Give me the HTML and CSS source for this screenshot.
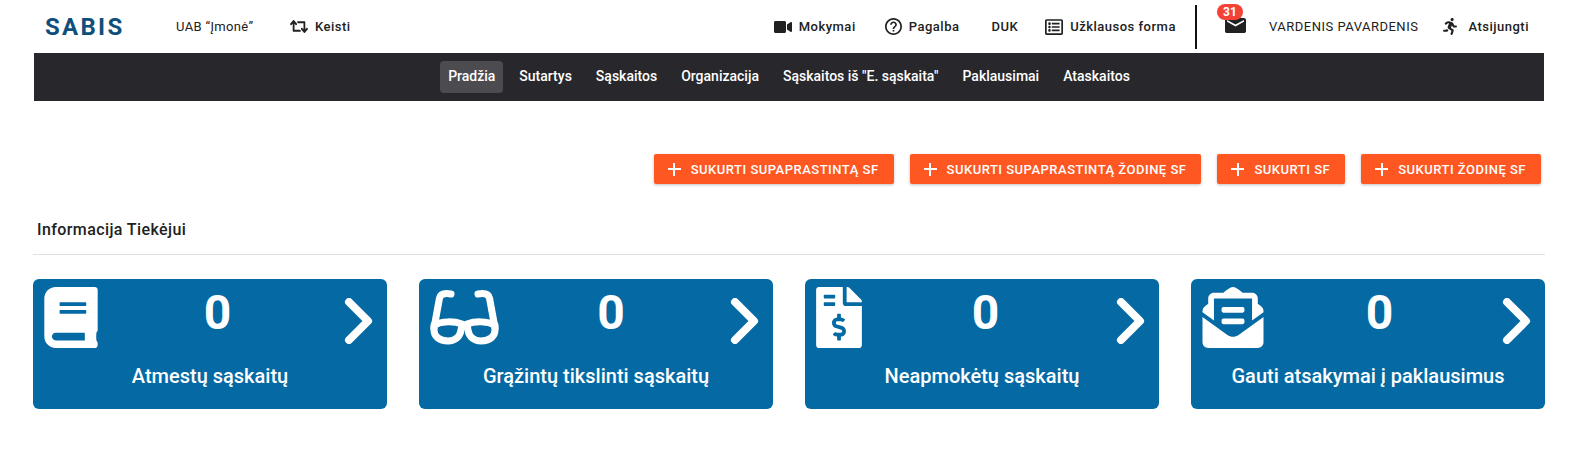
FILE: index.html
```html
<!doctype html>
<html lang="lt">
  <head>
    <meta charset="UTF-8" />
    <meta name="viewport" content="width=device-width, initial-scale=1.0" />
    <title>SABIS</title>
    <link rel="stylesheet" href="styles.css">
  </head>
  <body>
    <!-- Top bar -->
    <header class="topbar">
      <div class="brand">SABIS</div>
      <div class="company">UAB “Įmonė”</div>
      <a class="top-link switch">
        <svg class="ico-retweet" viewBox="0 0 640 512" preserveAspectRatio="none"><path d="M629.657 343.598L528.971 444.284c-9.373 9.372-24.568 9.372-33.941 0L394.343 343.598c-9.373-9.373-9.373-24.569 0-33.941l10.823-10.823c9.562-9.562 25.133-9.34 34.419.492L480 342.118V160H292.451a24.005 24.005 0 0 1-16.971-7.029l-16-16C244.361 121.851 255.069 96 276.451 96H520c13.255 0 24 10.745 24 24v222.118l40.416-43.792c9.285-9.831 24.856-10.054 34.419-.492l10.823 10.823c9.372 9.372 9.372 24.569-.001 33.941zm-265.138 15.431A23.999 23.999 0 0 0 347.548 352H160V169.881l40.416 43.792c9.286 9.831 24.856 10.054 34.419.491l10.822-10.822c9.373-9.373 9.373-24.569 0-33.941L144.971 67.716c-9.373-9.373-24.569-9.373-33.941 0L10.343 168.402c-9.373 9.373-9.373 24.569 0 33.941l10.822 10.822c9.562 9.562 25.133 9.34 34.419-.491L96 169.881V392c0 13.255 10.745 24 24 24h243.549c21.382 0 32.09-25.851 16.971-40.971l-16.001-16z"/></svg>
        Keisti
      </a>
      <div class="top-right">
        <a class="top-link link-video">
          <svg class="ico-video" viewBox="0 0 576 512"><path d="M336.2 64H47.8C21.4 64 0 85.4 0 111.8v288.4C0 426.6 21.4 448 47.8 448h288.4c26.4 0 47.8-21.4 47.8-47.8V111.8c0-26.4-21.4-47.8-47.8-47.8zm189.4 37.7L416 177.3v157.4l109.6 75.5c21.2 14.6 50.4-.3 50.4-25.8V127.5c0-25.4-29.1-40.4-50.4-25.8z"/></svg>
          Mokymai
        </a>
        <a class="top-link link-help">
          <svg class="ico-help" viewBox="2 2 20 20"><path d="M11 18h2v-2h-2v2zm1-16C6.48 2 2 6.48 2 12s4.48 10 10 10 10-4.48 10-10S17.52 2 12 2zm0 18c-4.41 0-8-3.59-8-8s3.59-8 8-8 8 3.59 8 8-3.59 8-8 8zm0-14c-2.21 0-4 1.79-4 4h2c0-1.1.9-2 2-2s2 .9 2 2c0 2-3 1.75-3 5h2c0-2.25 3-2.5 3-5 0-2.21-1.79-4-4-4z"/></svg>
          Pagalba
        </a>
        <a class="top-link link-duk">DUK</a>
        <a class="top-link">
          <svg class="ico-list" viewBox="0 0 512 512"><path d="M464 32H48C21.49 32 0 53.49 0 80v352c0 26.51 21.49 48 48 48h416c26.51 0 48-21.49 48-48V80c0-26.51-21.49-48-48-48zm-6 400H54a6 6 0 0 1-6-6V86a6 6 0 0 1 6-6h404a6 6 0 0 1 6 6v340a6 6 0 0 1-6 6zm-42-92v24c0 6.627-5.373 12-12 12H204c-6.627 0-12-5.373-12-12v-24c0-6.627 5.373-12 12-12h200c6.627 0 12 5.373 12 12zm0-96v24c0 6.627-5.373 12-12 12H204c-6.627 0-12-5.373-12-12v-24c0-6.627 5.373-12 12-12h200c6.627 0 12 5.373 12 12zm0-96v24c0 6.627-5.373 12-12 12H204c-6.627 0-12-5.373-12-12v-24c0-6.627 5.373-12 12-12h200c6.627 0 12 5.373 12 12zm-252 12c0 19.882-16.118 36-36 36s-36-16.118-36-36 16.118-36 36-36 36 16.118 36 36zm0 96c0 19.882-16.118 36-36 36s-36-16.118-36-36 16.118-36 36-36 36 16.118 36 36zm0 96c0 19.882-16.118 36-36 36s-36-16.118-36-36 16.118-36 36-36 36 16.118 36 36z"/></svg>
          Užklausos forma
        </a>
        <div class="divider"></div>
        <a class="mail">
          <svg class="ico-mail" viewBox="2 4 20 16" preserveAspectRatio="none"><path d="M20 4H4c-1.1 0-1.99.9-1.99 2L2 18c0 1.1.9 2 2 2h16c1.1 0 2-.9 2-2V6c0-1.1-.9-2-2-2zm0 4l-8 5-8-5V6l8 5 8-5v2z"/></svg>
          <span class="badge">31</span>
        </a>
        <div class="user">VARDENIS PAVARDENIS</div>
        <a class="top-link logout">
          <svg class="ico-run" viewBox="0 0 416 512"><path d="M272 96c26.51 0 48-21.49 48-48S298.51 0 272 0s-48 21.49-48 48 21.49 48 48 48zM113.69 317.47l-14.8 34.52H32c-17.67 0-32 14.33-32 32s14.33 32 32 32h77.45c19.25 0 36.58-11.44 44.11-29.09l8.79-20.52-10.67-6.3c-17.32-10.23-30.06-25.37-37.99-42.61zM384 223.99h-44.03l-26.06-53.25c-12.5-25.55-35.45-44.23-61.78-50.94l-71.08-21.14c-28.3-6.8-57.77-.55-80.84 17.14l-39.67 30.41c-14.03 10.75-16.69 30.83-5.92 44.86s30.84 16.66 44.86 5.92l39.69-30.41c7.67-5.89 17.44-8 25.27-6.14l14.7 4.37-37.46 87.39c-12.62 29.48-1.31 64.01 26.3 80.31l84.98 50.17-27.47 87.73c-5.28 16.86 4.11 34.81 20.97 40.09 3.19 1 6.41 1.48 9.58 1.48 13.61 0 26.23-8.77 30.52-22.45l31.64-101.06c5.91-20.77-2.89-43.08-21.64-54.39l-61.24-36.14 31.31-78.28 20.27 41.43c8 16.34 24.92 26.89 43.11 26.89H384c17.67 0 32-14.33 32-32s-14.33-31.99-32-31.99z"/></svg>
          Atsijungti
        </a>
      </div>
    </header>

    <!-- Main menu -->
    <nav class="menu">
      <a class="menu-item active">Pradžia</a>
      <a class="menu-item">Sutartys</a>
      <a class="menu-item">Sąskaitos</a>
      <a class="menu-item">Organizacija</a>
      <a class="menu-item">Sąskaitos iš "E. sąskaita"</a>
      <a class="menu-item">Paklausimai</a>
      <a class="menu-item">Ataskaitos</a>
    </nav>

    <!-- Create buttons -->
    <div class="actions">
      <button class="btn"><span class="plus"></span>Sukurti supaprastintą SF</button>
      <button class="btn"><span class="plus"></span>Sukurti supaprastintą žodinę SF</button>
      <button class="btn"><span class="plus"></span>Sukurti SF</button>
      <button class="btn"><span class="plus"></span>Sukurti žodinę SF</button>
    </div>

    <h2 class="info-title">Informacija Tiekėjui</h2>

    <!-- Summary cards -->
    <div class="cards">
      <a class="card">
        <div class="card-top">
          <svg class="ico-book" viewBox="0 0 448 512"><path d="M448 360V24c0-13.3-10.7-24-24-24H96C43 0 0 43 0 96v320c0 53 43 96 96 96h328c13.3 0 24-10.7 24-24v-16c0-7.5-3.5-14.3-8.9-18.7-4.2-15.4-4.2-59.3 0-74.7 5.4-4.3 8.9-11.1 8.9-18.6zM128 134c0-3.3 2.7-6 6-6h212c3.3 0 6 2.7 6 6v20c0 3.3-2.7 6-6 6H134c-3.3 0-6-2.7-6-6v-20zm0 64c0-3.3 2.7-6 6-6h212c3.3 0 6 2.7 6 6v20c0 3.3-2.7 6-6 6H134c-3.3 0-6-2.7-6-6v-20zM340 448H96c-17.7 0-32-14.3-32-32 0-17.6 14.4-32 32-32h244z"/></svg>
          <span class="count">0</span>
          <svg class="chevron" viewBox="0 0 36 46"><polyline points="12,4 31,23 12,42"/></svg>
        </div>
        <div class="card-title">Atmestų sąskaitų</div>
      </a>
      <a class="card">
        <div class="card-top">
          <svg class="ico-glasses" viewBox="0 0 69 61">
            <path d="M4 41 L9.5 11 Q11 5 21 7 M65 41 L59.5 11 Q58 5 48 7"/>
            <path d="M4 38 C12 34 24 34 32 37 L31 43 C30 50 25 54 18 54 C9 54 4 49 4 43 Z"/>
            <path d="M65 38 C57 34 45 34 37 37 L38 43 C39 50 44 54 51 54 C60 54 65 49 65 43 Z"/>
            <path d="M32 39 L37 39"/>
          </svg>
          <span class="count">0</span>
          <svg class="chevron" viewBox="0 0 36 46"><polyline points="12,4 31,23 12,42"/></svg>
        </div>
        <div class="card-title">Grąžintų tikslinti sąskaitų</div>
      </a>
      <a class="card">
        <div class="card-top">
          <svg class="ico-invoice" viewBox="0 0 384 512"><path d="M377 105L279.1 7c-4.5-4.5-10.6-7-17-7H256v128h128v-6.1c0-6.3-2.5-12.4-7-16.9zm-153 31V0H24C10.7 0 0 10.7 0 24v464c0 13.3 10.7 24 24 24h336c13.3 0 24-10.7 24-24V160H248c-13.2 0-24-10.8-24-24zM64 72c0-4.42 3.58-8 8-8h80c4.42 0 8 3.58 8 8v16c0 4.42-3.58 8-8 8H72c-4.42 0-8-3.58-8-8V72zm0 80v-16c0-4.42 3.58-8 8-8h80c4.42 0 8 3.58 8 8v16c0 4.42-3.58 8-8 8H72c-4.42 0-8-3.58-8-8zm144 263.88V440c0 4.42-3.58 8-8 8h-16c-4.42 0-8-3.58-8-8v-24.29c-11.29-.58-22.27-4.52-31.37-11.35-3.9-2.93-4.1-8.77-.57-12.14l11.75-11.21c2.77-2.64 6.89-2.76 10.13-.73 3.87 2.42 8.26 3.72 12.82 3.72h28.11c6.5 0 11.8-5.92 11.8-13.19 0-5.95-3.61-11.19-8.77-12.73l-45-13.5c-18.59-5.58-31.58-23.42-31.58-43.39 0-24.52 19.05-44.44 42.67-45.07V232c0-4.42 3.58-8 8-8h16c4.42 0 8 3.58 8 8v24.29c11.29.58 22.27 4.51 31.37 11.35 3.9 2.93 4.1 8.77.57 12.14l-11.75 11.21c-2.77 2.64-6.89 2.76-10.13.73-3.87-2.43-8.26-3.72-12.82-3.72h-28.11c-6.5 0-11.8 5.92-11.8 13.19 0 5.95 3.61 11.19 8.77 12.73l45 13.5c18.59 5.58 31.58 23.42 31.58 43.39 0 24.53-19.05 44.44-42.67 45.07z"/></svg>
          <span class="count">0</span>
          <svg class="chevron" viewBox="0 0 36 46"><polyline points="12,4 31,23 12,42"/></svg>
        </div>
        <div class="card-title">Neapmokėtų sąskaitų</div>
      </a>
      <a class="card">
        <div class="card-top">
          <svg class="ico-open" viewBox="0 0 512 512"><path d="M176 216h160c8.84 0 16-7.16 16-16v-16c0-8.84-7.16-16-16-16H176c-8.84 0-16 7.16-16 16v16c0 8.84 7.16 16 16 16zm-16 80c0 8.84 7.16 16 16 16h160c8.84 0 16-7.16 16-16v-16c0-8.84-7.16-16-16-16H176c-8.84 0-16 7.16-16 16v16zm96 121.13c-16.42 0-32.84-5.06-46.86-15.19L0 250.86V464c0 26.51 21.49 48 48 48h416c26.51 0 48-21.49 48-48V250.86L302.86 401.94c-14.02 10.12-30.44 15.19-46.86 15.19zm237.61-254.18c-8.85-6.94-17.24-13.47-29.61-22.81V96c0-26.51-21.49-48-48-48h-77.55c-3.04-2.2-5.87-4.26-9.04-6.56C312.6 29.17 279.2-.35 256 0c-23.2-.35-56.59 29.17-73.41 41.44-3.17 2.3-6 4.36-9.04 6.56H96c-26.51 0-48 21.49-48 48v44.14c-12.37 9.33-20.76 15.87-29.61 22.81A47.995 47.995 0 0 0 0 200.72v10.65l96 69.35V96h320v184.72l96-69.35v-10.65c0-14.74-6.78-28.67-18.39-37.77z"/></svg>
          <span class="count">0</span>
          <svg class="chevron" viewBox="0 0 36 46"><polyline points="12,4 31,23 12,42"/></svg>
        </div>
        <div class="card-title">Gauti atsakymai į paklausimus</div>
      </a>
    </div>
  </body>
</html>
```

FILE: styles.css
```css
body {
  margin: 0;
  background: #fff;
  font-family: Roboto, Arial, sans-serif;
  color: #212121;
}
svg {
  display: block;
  fill: currentColor;
  flex: none;
}

/* top bar */
.topbar {
  display: flex;
  align-items: center;
  height: 53px;
  padding: 0 57px 0 45px;
  font-size: 13px;
  letter-spacing: 0.5px;
}
.brand {
  width: 131px;
  font-size: 24px;
  font-weight: 700;
  letter-spacing: 2.3px;
  color: #0f4f7a;
}
.company {
  width: 114px;
  letter-spacing: 0.35px;
}
.top-link {
  display: flex;
  align-items: center;
  gap: 7px;
  font-weight: 500;
}
.top-right {
  display: flex;
  align-items: center;
  margin-left: auto;
}
.top-right .link-video {
  margin-right: 29px;
}
.top-right .link-help {
  margin-right: 32px;
}
.top-right .link-duk {
  margin-right: 27px;
}
.ico-retweet {
  width: 18px;
  height: 17px;
}
.ico-video {
  width: 18px;
  height: 16px;
}
.ico-help {
  width: 17px;
  height: 17px;
}
.ico-list {
  width: 18px;
  height: 18px;
}
.ico-run {
  width: 14px;
  height: 17px;
  margin-right: 4px;
}
.divider {
  width: 2px;
  height: 44px;
  margin: 0 28px 0 19px;
  background: #111;
}
.mail {
  position: relative;
  margin: -8px 23px 0 0;
  padding-top: 6px;
}
.ico-mail {
  width: 21px;
  height: 15px;
}
.badge {
  position: absolute;
  top: -8px;
  left: -8px;
  width: 26px;
  height: 16px;
  border-radius: 8px;
  background: #f44336;
  color: #fff;
  font-size: 12px;
  font-weight: 700;
  line-height: 16px;
  text-align: center;
  letter-spacing: 0;
}
.user {
  margin-right: 25px;
}

/* main menu */
.menu {
  display: flex;
  justify-content: center;
  align-items: center;
  gap: 8px;
  height: 48px;
  margin: 0 42px 0 34px;
  background: #28282c;
}
.menu-item {
  padding: 7px 8px 9px;
  height: 16px;
  border-radius: 4px;
  color: #fff;
  font-size: 14px;
  font-weight: 500;
  line-height: 16px;
}
.menu-item.active {
  background: #4c4c50;
}

/* buttons */
.actions {
  display: flex;
  justify-content: flex-end;
  gap: 16px;
  margin: 53px 45px 0 0;
}
.btn {
  display: flex;
  align-items: center;
  height: 30px;
  padding: 0 15px 0 14px;
  border: none;
  border-radius: 2px;
  background: #ff5722;
  color: #fff;
  font-family: inherit;
  font-size: 13px;
  font-weight: 500;
  letter-spacing: 0.5px;
  text-transform: uppercase;
  box-shadow: 0 1px 3px rgba(0, 0, 0, 0.25);
}
.plus {
  width: 13px;
  height: 13px;
  margin-right: 10px;
  background:
    linear-gradient(#fff, #fff) center / 13px 2px no-repeat,
    linear-gradient(#fff, #fff) center / 2px 13px no-repeat;
}

/* section title */
.info-title {
  margin: 36px 41px 0 33px;
  padding: 0 0 14px 4px;
  border-bottom: 1px solid #e0e0e0;
  font-size: 16px;
  font-weight: 500;
  line-height: 20px;
  letter-spacing: 0.4px;
}

/* cards */
.cards {
  display: grid;
  grid-template-columns: repeat(4, 1fr);
  gap: 32px;
  margin: 24px 41px 0 33px;
}
.card {
  height: 130px;
  box-sizing: border-box;
  padding: 8px 14px 0 11px;
  border-radius: 6px;
  background: #0569a3;
  color: #fff;
}
.card-top {
  display: flex;
  justify-content: space-between;
  align-items: flex-start;
  height: 62px;
}
.count {
  margin-top: -2px;
  font-size: 48px;
  font-weight: 700;
  line-height: 56px;
}
.chevron {
  width: 36px;
  height: 46px;
  margin-top: 11px;
}
.chevron polyline {
  fill: none;
  stroke: currentColor;
  stroke-width: 8;
  stroke-linecap: round;
  stroke-linejoin: round;
}
.ico-book {
  width: 54px;
  height: 61px;
}
.ico-glasses {
  width: 69px;
  height: 61px;
}
.ico-glasses path {
  fill: none;
  stroke: currentColor;
  stroke-width: 7;
  stroke-linecap: round;
  stroke-linejoin: round;
}
.ico-invoice {
  width: 46px;
  height: 61px;
}
.ico-open {
  width: 62px;
  height: 61px;
}
.card-title {
  margin: 14px 0 0 3px;
  text-align: center;
  font-size: 20px;
  font-weight: 500;
  line-height: 26px;
}
```
